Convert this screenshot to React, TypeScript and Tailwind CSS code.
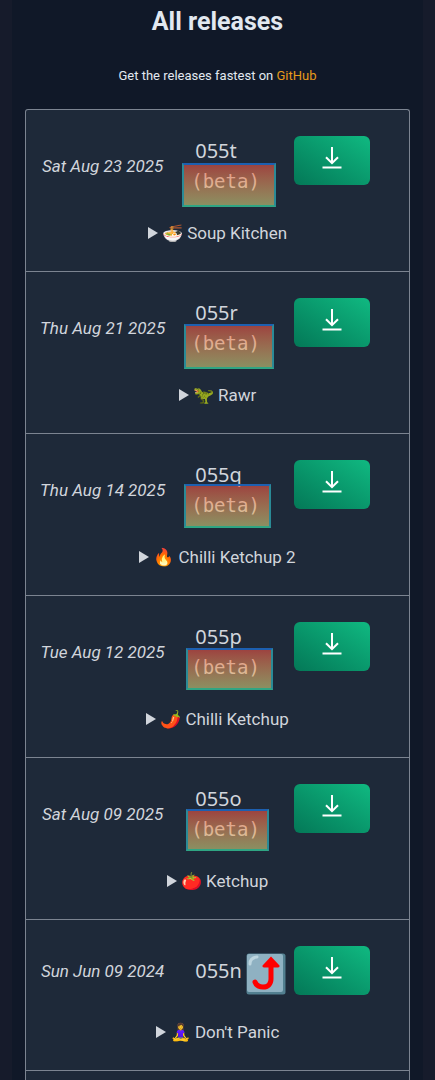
type Release = {
  date: string
  version: string
  emoji: string
  name: string
  highlight?: string
}

const releases: Release[] = [
  { date: 'Sat Aug 23 2025', version: '055t', emoji: '🍜', name: 'Soup Kitchen', highlight: 'left-[3px] top-[27px] h-[44px] w-[94px]' },
  { date: 'Thu Aug 21 2025', version: '055r', emoji: '🦖', name: 'Rawr', highlight: 'left-[5px] top-[26px] h-[45px] w-[90px]' },
  { date: 'Thu Aug 14 2025', version: '055q', emoji: '🔥', name: 'Chilli Ketchup 2', highlight: 'left-[5px] top-[24px] h-[44px] w-[87px]' },
  { date: 'Tue Aug 12 2025', version: '055p', emoji: '🌶️', name: 'Chilli Ketchup', highlight: 'left-[7px] top-[26px] h-[42px] w-[87px]' },
  { date: 'Sat Aug 09 2025', version: '055o', emoji: '🍅', name: 'Ketchup', highlight: 'left-[7px] top-[25px] h-[42px] w-[83px]' },
  { date: 'Sun Jun 09 2024', version: '055n', emoji: '🧘‍♀️', name: "Don't Panic" },
]

function DownloadIcon() {
  return (
    <svg viewBox="0 0 20 22" className="h-[22px] w-5" fill="none" stroke="currentColor" strokeWidth="2" aria-hidden>
      <path d="M10 0v16M4 10.2l6 6 6-6M.5 20.5h19" />
    </svg>
  )
}

function PromoteArrow() {
  return (
    <svg viewBox="0 0 40 42" className="absolute left-[67px] -top-[3px] h-[42px] w-10" aria-label="Latest stable" role="img">
      <rect x=".5" y=".5" width="39" height="41" rx="2.5" fill="#527f90" />
      <rect x="1" y="1" width="36" height="38" rx="2" fill="#8fb1c2" />
      <path d="M4 11C4 7 6 4.500 11 4" fill="none" stroke="#bdd5df" strokeWidth="3" strokeLinecap="round" />
      <path d="M9 29c1.500 4 4 5 8 5 5 0 8-3 8-8V12" fill="none" stroke="#f00" strokeWidth="5" strokeLinecap="round" />
      <path d="M25 3.500l8.500 9q.500 2-1.500 2H18q-2 0-1.500-2z" fill="#f00" />
    </svg>
  )
}

function ReleaseRow({ release }: { release: Release }) {
  const { date, version, emoji, name, highlight } = release

  return (
    <li className="border-b border-[#7c8491] py-[26px]">
      <div className="grid grid-cols-[4fr_3fr_3fr] items-start">
        <time className="self-center text-center text-[17px] leading-6 italic">{date}</time>
        <div className="relative self-center pl-3">
          <div className="pl-1 font-['Noto_Sans',sans-serif] text-[20px] leading-[30px]">{version}</div>
          {highlight ? (
            <>
              <div className="font-['DejaVu_Sans_Mono','Liberation_Mono',monospace] text-[19px] leading-[30px]">(beta)</div>
              <span
                className={`absolute border-2 border-x-[#2a8a96] border-t-[#1d5fb0] border-b-[#2fa583] bg-linear-to-b from-[#f05545]/60 to-[#d3d37c]/60 ${highlight}`}
              />
            </>
          ) : (
            <PromoteArrow />
          )}
        </div>
        <button
          type="button"
          aria-label={`Download ${version}`}
          className="flex h-[49px] w-[76px] cursor-pointer justify-center rounded-md bg-linear-to-tr from-[#047857] to-[#10b981] pt-[11px] text-white"
        >
          <DownloadIcon />
        </button>
      </div>
      <details className="mt-[25px] text-center text-[17px] leading-6">
        <summary className="flex cursor-pointer list-none items-center justify-center">
          <svg viewBox="0 0 10 12" className="mr-1 h-3 w-[10px]" fill="currentColor" aria-hidden>
            <path d="M0 0l10 6-10 6z" />
          </svg>
          <span>
            {emoji} {name}
          </span>
        </summary>
      </details>
    </li>
  )
}

export default function App() {
  return (
    <div className="min-h-screen bg-[#161b2b] px-3 font-[Roboto,sans-serif] text-gray-300">
      <main className="flex min-h-screen flex-col bg-gray-900 px-[13px]">
        <h1 className="pt-[5px] text-center text-[25px] leading-[34px] font-bold text-slate-200">All releases</h1>
        <p className="mt-[27px] text-center text-[13px] leading-5 text-slate-200">
          Get the releases fastest on{' '}
          <a href="https://github.com" className="text-[#e69a1b]">
            GitHub
          </a>
        </p>
        <ul className="mt-[23px] grow rounded-t-[3px] border border-b-0 border-[#7c8491] bg-gray-800">
          {releases.map((release) => (
            <ReleaseRow key={release.version} release={release} />
          ))}
        </ul>
      </main>
    </div>
  )
}
